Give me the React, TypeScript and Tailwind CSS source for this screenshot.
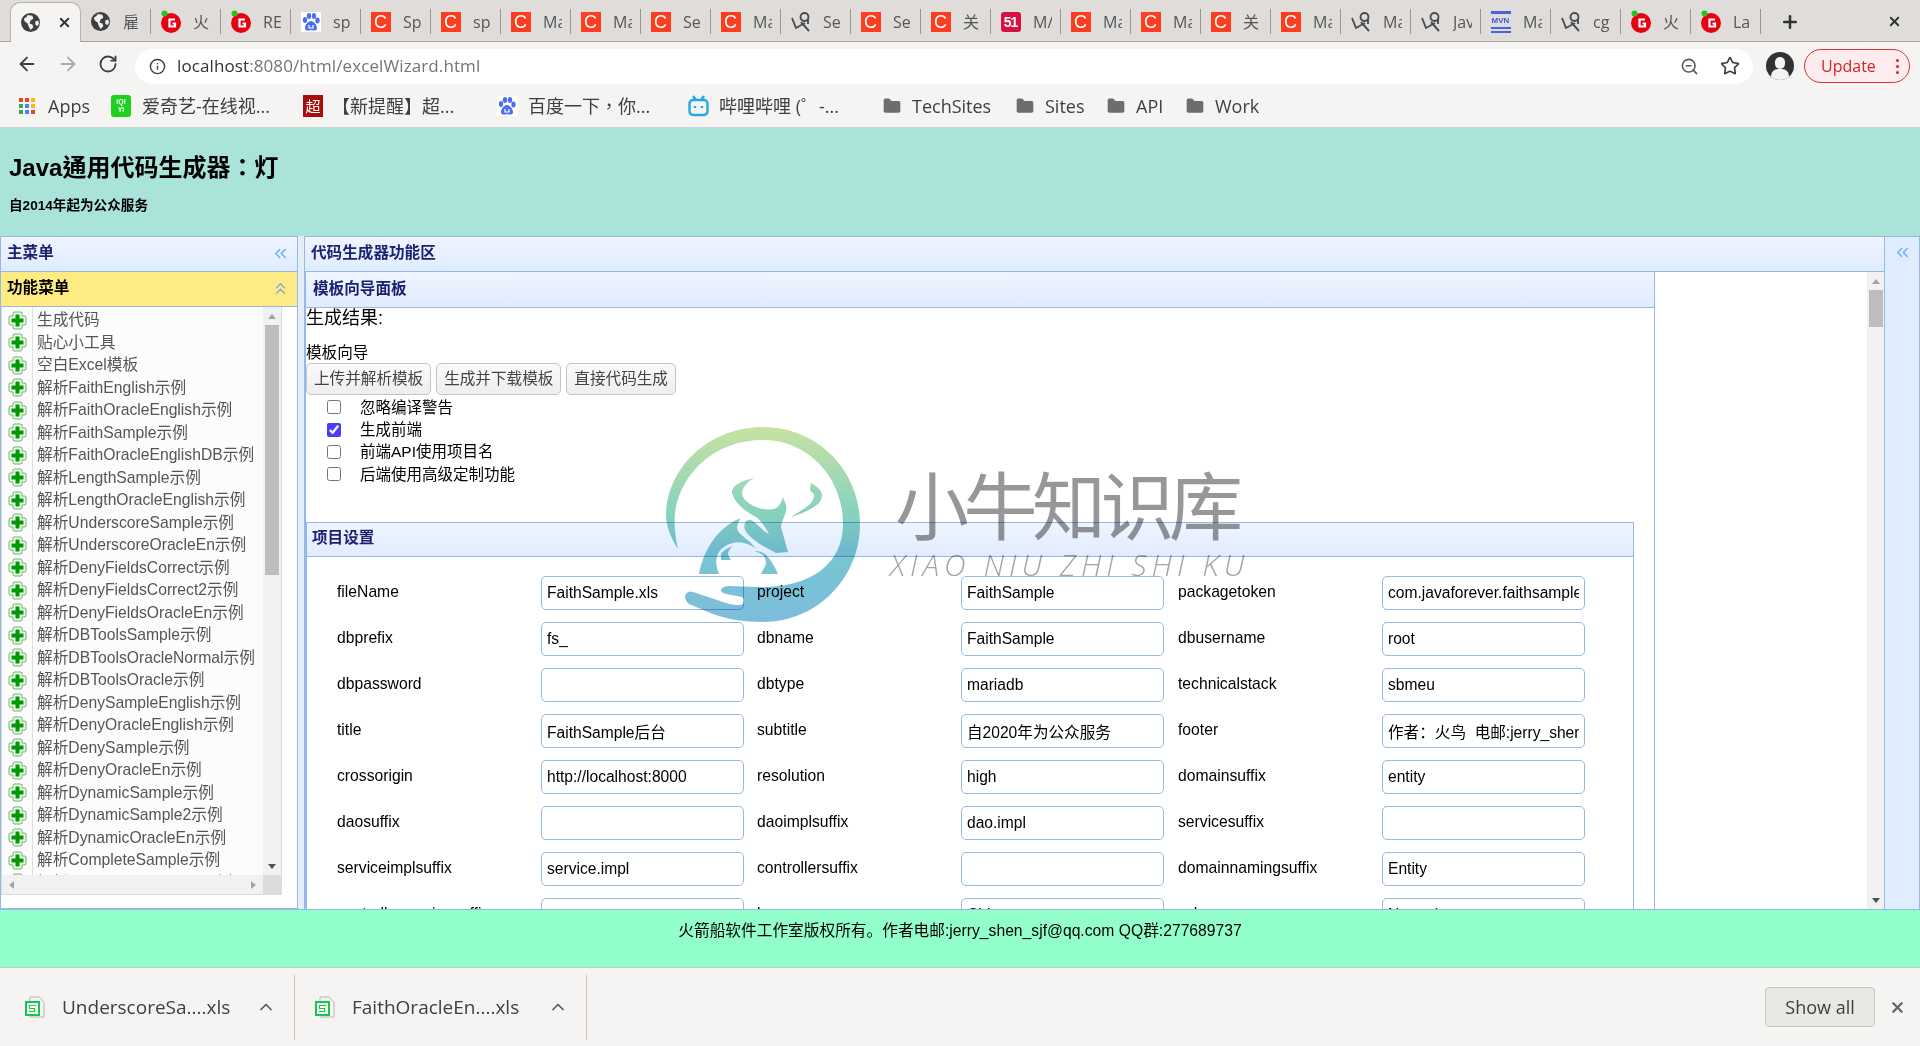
import { ArrowLeft, ArrowRight, ChevronUp, ChevronsLeft, ChevronsUp, Folder, Info, Plus, RotateCw, Star, X, ZoomOut } from 'lucide-react'

const sans = 'font-["Liberation_Sans","Noto_Sans_CJK_TC",sans-serif]'
const cn = 'font-["Liberation_Sans","Noto_Sans_CJK_SC",sans-serif]'
const ui = 'font-["Open_Sans","Noto_Sans_CJK_TC",sans-serif]'

function Globe({ size = 19 }: { size?: number }) {
  return (
    <svg width={size} height={size} viewBox="0 0 20 20" className="shrink-0">
      <circle cx="10" cy="10" r="10" fill="#3b3f42" />
      <path d="M7 2l5 1 1 3-3 2-1 3 3 1 1 3-3 3-2-4-1-3-3-2-1-3 3-2z" fill="#f2f1ef" />
      <path d="M15 9l3-1 1 3-2 3-2-2z" fill="#f2f1ef" />
    </svg>
  )
}

function RedG() {
  return (
    <svg width="20" height="24" viewBox="0 0 20 24" className="shrink-0">
      <circle cx="10" cy="13" r="10" fill="#e60012" />
      <path d="M14 9.5H8.5v7H14v-3h-2.5" fill="none" stroke="#fff" strokeWidth="2.2" />
      <circle cx="3.5" cy="3.5" r="3" fill="#22c520" />
    </svg>
  )
}

function RedC() {
  return (
    <div className="w-5 h-5 shrink-0 bg-[#fc3d1f] flex items-center justify-center">
      <span className={`text-white text-[18px] leading-none ${sans}`}>C</span>
    </div>
  )
}

function Paw({ size = 20 }: { size?: number }) {
  return (
    <svg width={size} height={size} viewBox="0 0 20 20" className="shrink-0">
      <rect width="20" height="20" fill="#fff" />
      <g fill="#4e6ef2">
        <ellipse cx="4" cy="8" rx="2.2" ry="3" />
        <ellipse cx="8" cy="4" rx="2.2" ry="3" />
        <ellipse cx="13" cy="4" rx="2.2" ry="3" />
        <ellipse cx="16.5" cy="8.5" rx="2.2" ry="3" />
        <path d="M10 9c-3 0-6 4-6 7 0 3 3 3 6 2 3 1 6 1 6-2 0-3-3-7-6-7z" />
      </g>
      <path d="M8 13v3h4v-3" fill="none" stroke="#fff" strokeWidth="1.2" />
    </svg>
  )
}

function Bird() {
  return (
    <svg width="20" height="21" viewBox="0 0 20 21" className="shrink-0" fill="none" stroke="#4a4d50" strokeWidth="1.9">
      <path d="M1 7l4 10 9-5" />
      <circle cx="13.5" cy="6" r="4" />
      <path d="M10 11l8 9" />
      <path d="M17 8v5" />
    </svg>
  )
}

function Badge51() {
  return (
    <div className="w-5 h-5 shrink-0 rounded-[3px] bg-[#d6113f] flex items-center justify-center">
      <span className={`text-white text-[14px] font-bold leading-none tracking-[-1px] ${sans}`}>51</span>
    </div>
  )
}

function Mvn() {
  return (
    <div className="w-5 shrink-0 flex flex-col gap-[2px]">
      <div className="h-[3px] bg-[#4a63d8]" />
      <span className={`text-[8px] font-bold leading-[9px] text-[#3d5ce0] text-center ${sans}`}>MVN</span>
      <div className="h-[2px] bg-[#4a63d8]" />
      <div className="h-[2px] bg-[#4a63d8]" />
    </div>
  )
}

const tabs: [string, string][] = [
  ['globe', '雇'], ['g', '火'], ['g', 'RE'], ['paw', 'sp'], ['c', 'Sp'], ['c', 'sp'], ['c', 'Ma'], ['c', 'Ma'],
  ['c', 'Se'], ['c', 'Ma'], ['bird', 'Se'], ['c', 'Se'], ['c', '关'], ['51', 'M/'], ['c', 'Ma'], ['c', 'Ma'],
  ['c', '关'], ['c', 'Ma'], ['bird', 'Ma'], ['bird', 'Jav'], ['mvn', 'Ma'], ['bird', 'cg'], ['g', '火'], ['g', 'La'],
]

function TabIcon({ kind }: { kind: string }) {
  if (kind === 'globe') return <Globe />
  if (kind === 'g') return <RedG />
  if (kind === 'paw') return <Paw />
  if (kind === 'bird') return <Bird />
  if (kind === '51') return <Badge51 />
  if (kind === 'mvn') return <Mvn />
  return <RedC />
}

function TabBar() {
  return (
    <div className={`h-[42px] shrink-0 bg-[#dfdcd9] border-b border-[#a8a5a0] flex items-stretch pt-[2px] pl-[10px] ${ui}`}>
      <div className="w-[71px] shrink-0 -mb-px bg-[#f5f4f2] border border-b-0 border-[#b5b2ad] rounded-t-[10px] flex items-center pl-[10px] gap-[17px]">
        <Globe />
        <X size={15} strokeWidth={3} className="text-[#2e3436]" />
      </div>
      {tabs.map(([kind, label], i) => (
        <div key={i} className="w-[70px] shrink-0 flex items-center">
          <div className="w-[19px]" />
          <div className="w-[21px] -ml-[10px] flex justify-center shrink-0"><TabIcon kind={kind} /></div>
          <span className="ml-[12px] w-[19px] overflow-hidden whitespace-nowrap text-[16px] text-[#54585a]">{label}</span>
          <div className="ml-auto h-[25px] w-px bg-[#9a9792]" />
        </div>
      ))}
      <div className="w-[58px] shrink-0 flex items-center justify-center">
        <Plus size={20} strokeWidth={3} className="text-[#2e3436]" />
      </div>
      <div className="flex-1 flex items-center justify-center pl-[50px]">
        <X size={15} strokeWidth={3} className="text-[#2e3436]" />
      </div>
    </div>
  )
}

function Toolbar() {
  return (
    <div className={`h-[43px] shrink-0 bg-[#f5f4f2] flex items-center ${ui}`}>
      <div className="w-[135px] shrink-0 flex items-center pl-[16px] gap-[19px]">
        <ArrowLeft size={22} strokeWidth={2} className="text-[#3c4043]" />
        <ArrowRight size={22} strokeWidth={2} className="text-[#a9abad]" />
        <RotateCw size={20} strokeWidth={2.2} className="text-[#3c4043]" />
      </div>
      <div className="w-[1618px] h-[35px] mt-[5px] shrink-0 bg-white rounded-full flex items-center pl-[14px] pr-[13px]">
        <Info size={17} className="text-[#3c4043]" />
        <span className="ml-[11px] text-[17px] tracking-[0.1px] text-[#70757a] whitespace-nowrap">
          <span className="text-[#2e3436]">localhost</span>:8080/html/excelWizard.html
        </span>
        <ZoomOut size={19} className="ml-auto text-[#54585a]" />
        <Star size={20} strokeWidth={2} className="ml-[21px] text-[#3c4043]" />
      </div>
      <div className="ml-[13px] w-[28px] h-[28px] mt-[5px] shrink-0 rounded-full bg-[#2e3436] relative overflow-hidden">
        <div className="absolute left-[9px] top-[5px] w-[10px] h-[12px] rounded-full bg-[#f5f4f2]" />
        <div className="absolute left-[5px] top-[17px] w-[18px] h-[14px] rounded-full bg-[#f5f4f2]" />
      </div>
      <div className="ml-[10px] w-[106px] h-[34px] mt-[5px] shrink-0 rounded-full border border-[#d9303a] bg-[#fceced] flex items-center pl-[16px] text-[16px] text-[#d4232d]">
        Update
        <span className="ml-auto mr-[10px] flex flex-col gap-[3px]">
          <i className="w-[3px] h-[3px] rounded-full bg-[#d4232d]" />
          <i className="w-[3px] h-[3px] rounded-full bg-[#d4232d]" />
          <i className="w-[3px] h-[3px] rounded-full bg-[#d4232d]" />
        </span>
      </div>
    </div>
  )
}

function AppsIcon() {
  const cols = ['#ea4335', '#ea4335', '#fbbc05', '#34a853', '#4285f4', '#fbbc05', '#34a853', '#4285f4', '#ea4335']
  return (
    <div className="grid grid-cols-3 gap-[2px] w-[16px] shrink-0">
      {cols.map((c, i) => <div key={i} className="h-[4px]" style={{ background: c }} />)}
    </div>
  )
}

function Bookmarks() {
  const folder = <Folder size={20} fill="#6a6e70" strokeWidth={0} className="shrink-0" />
  const label = 'text-[#3c4043] text-[18px] whitespace-nowrap'
  return (
    <div className={`h-[43px] shrink-0 bg-[#f5f4f2] border-b border-[#cfd8d5] flex items-center pl-[19px] ${ui}`}>
      <div className="w-[92px] shrink-0 flex items-center gap-[13px]"><AppsIcon /><span className={label}>Apps</span></div>
      <div className="w-[192px] shrink-0 flex items-center gap-[11px]">
        <div className="w-[20px] h-[22px] rounded-[3px] bg-[#1fd11f] flex items-center justify-center">
          <span className={`text-[7px] font-bold leading-[8px] text-white text-center ${sans}`}>iQI<br />YI</span>
        </div>
        <span className={label}>爱奇艺-在线视...</span>
      </div>
      <div className="w-[194px] shrink-0 flex items-center gap-[9px]">
        <div className="w-[20px] h-[22px] bg-[#a80c0c] flex items-center justify-center text-white text-[15px] leading-none">超</div>
        <span className={label}>【新提醒】超...</span>
      </div>
      <div className="w-[191px] shrink-0 flex items-center gap-[11px]"><Paw /><span className={label}>百度一下，你...</span></div>
      <div className="w-[194px] shrink-0 flex items-center gap-[10px]">
        <svg width="21" height="22" viewBox="0 0 21 22" fill="none" stroke="#20a8e8" strokeWidth="2.4" className="shrink-0">
          <rect x="1.5" y="5" width="18" height="15" rx="3.5" />
          <path d="M5 1l3 4M16 1l-3 4" />
          <path d="M7 11v2M14 11v2" />
        </svg>
        <span className={label}>哔哩哔哩 (゜-...</span>
      </div>
      <div className="w-[133px] shrink-0 flex items-center gap-[10px]">{folder}<span className={label}>TechSites</span></div>
      <div className="w-[91px] shrink-0 flex items-center gap-[10px]">{folder}<span className={label}>Sites</span></div>
      <div className="w-[79px] shrink-0 flex items-center gap-[10px]">{folder}<span className={label}>API</span></div>
      <div className="flex items-center gap-[10px]">{folder}<span className={label}>Work</span></div>
    </div>
  )
}

const treeItems = [
  '生成代码', '贴心小工具', '空白Excel模板', '解析FaithEnglish示例', '解析FaithOracleEnglish示例', '解析FaithSample示例',
  '解析FaithOracleEnglishDB示例', '解析LengthSample示例', '解析LengthOracleEnglish示例', '解析UnderscoreSample示例',
  '解析UnderscoreOracleEn示例', '解析DenyFieldsCorrect示例', '解析DenyFieldsCorrect2示例', '解析DenyFieldsOracleEn示例',
  '解析DBToolsSample示例', '解析DBToolsOracleNormal示例', '解析DBToolsOracle示例', '解析DenySampleEnglish示例',
  '解析DenyOracleEnglish示例', '解析DenySample示例', '解析DenyOracleEn示例', '解析DynamicSample示例',
  '解析DynamicSample2示例', '解析DynamicOracleEn示例', '解析CompleteSample示例', '解析CompleteOracleEn示例',
]

function PlusIcon() {
  return (
    <svg width="19" height="19" viewBox="0 0 19 19" className="shrink-0">
      <path d="M6 1h7l1 1v3h3l1 1v7l-1 1h-3v3l-1 1H6l-1-1v-3H2l-1-1V6l1-1h3V2z" fill="#eaf6ea" stroke="#6fb56f" />
      <path d="M7.5 3.5h4v4h4v4h-4v4h-4v-4h-4v-4h4z" fill="#009a00" />
    </svg>
  )
}

function Triangle({ dir, color = '#a3a3a3' }: { dir: 'up' | 'down' | 'left' | 'right'; color?: string }) {
  const pts = { up: '0,5 4,0 8,5', down: '0,0 8,0 4,5', left: '5,0 5,8 0,4', right: '0,0 0,8 5,4' }[dir]
  const wide = dir === 'up' || dir === 'down'
  return (
    <svg width={wide ? 8 : 5} height={wide ? 5 : 8} className="shrink-0">
      <polygon points={pts} fill={color} />
    </svg>
  )
}

function LeftPanel() {
  return (
    <div className={`w-[298px] shrink-0 flex flex-col border border-[#95b8e7] ${cn}`}>
      <div className="h-[35px] shrink-0 bg-gradient-to-b from-[#eff5ff] to-[#e0ecff] border-b border-[#95b8e7] flex items-center justify-between pl-[6px] pr-[7px] pb-[2px]">
        <span className="text-[15.6px] font-bold text-[#1c2171]">主菜单</span>
        <ChevronsLeft size={19} strokeWidth={1.6} className="text-[#6ea3f5]" />
      </div>
      <div className="h-[35px] shrink-0 bg-[#ffeb84] border-b border-[#95b8e7] flex items-center justify-between pl-[6px] pr-[7px] pb-[2px]">
        <span className="text-[15.6px] font-bold text-black">功能菜单</span>
        <ChevronsUp size={19} strokeWidth={1.6} className="text-[#7fa8d8]" />
      </div>
      <div className="flex-1 bg-white min-h-0 pb-[13px] pr-[15px]">
        <div className="h-full border border-t-0 border-[#dcdcdc] flex flex-col bg-[#fcfcfc]">
          <div className="flex-1 min-h-0 flex">
            <div className="flex-1 min-w-0 overflow-hidden pt-[2px] relative">
              <div className="absolute left-[30px] top-0 bottom-0 w-px bg-[#dfdfdf]" />
              {treeItems.map((t) => (
                <div key={t} className="h-[22.5px] flex items-center pl-[6px] text-[15.7px] text-[#555] whitespace-nowrap">
                  <PlusIcon />
                  <span className="ml-[10px]">{t}</span>
                </div>
              ))}
            </div>
            <div className="w-[18px] shrink-0 bg-[#f1f1f1] flex flex-col items-center">
              <div className="h-[18px] flex items-center justify-center shrink-0"><Triangle dir="up" /></div>
              <div className="w-[14px] h-[250px] bg-[#bdbdbd]" />
              <div className="mt-auto h-[18px] flex items-center justify-center shrink-0"><Triangle dir="down" color="#505050" /></div>
            </div>
          </div>
          <div className="h-[19px] shrink-0 bg-[#f1f1f1] flex items-center">
            <div className="flex-1 flex items-center justify-between px-[7px]">
              <Triangle dir="left" />
              <Triangle dir="right" />
            </div>
            <div className="w-[18px] h-full bg-[#dcdcdc]" />
          </div>
        </div>
      </div>
    </div>
  )
}

const rows: [string, string, string, string, string, string][] = [
  ['fileName', 'FaithSample.xls', 'project', 'FaithSample', 'packagetoken', 'com.javaforever.faithsample'],
  ['dbprefix', 'fs_', 'dbname', 'FaithSample', 'dbusername', 'root'],
  ['dbpassword', '', 'dbtype', 'mariadb', 'technicalstack', 'sbmeu'],
  ['title', 'FaithSample后台', 'subtitle', '自2020年为公众服务', 'footer', '作者：火鸟  电邮:jerry_shen_sjf@qq.com'],
  ['crossorigin', 'http://localhost:8000', 'resolution', 'high', 'domainsuffix', 'entity'],
  ['daosuffix', '', 'daoimplsuffix', 'dao.impl', 'servicesuffix', ''],
  ['serviceimplsuffix', 'service.impl', 'controllersuffix', '', 'domainnamingsuffix', 'Entity'],
  ['controllernamingsuffix', '', 'language', 'Chinese', 'schema', 'Normal'],
]

function Field({ value }: { value: string }) {
  return (
    <input
      readOnly
      value={value}
      className="w-[203px] h-[34px] rounded-[5px] border border-[#95b8e7] bg-white px-[5px] text-[15.6px] text-black outline-none"
    />
  )
}

function Wizard() {
  const label = 'h-[34px] flex items-center pb-[1px] text-[15.7px] text-black'
  return (
    <div className={`flex-1 min-w-0 overflow-hidden bg-white ${cn}`}>
      <div className="w-[1350px] h-full border-x border-[#95b8e7]">
        <div className="h-[36px] bg-gradient-to-b from-[#eff5ff] to-[#e0ecff] border-b border-[#95b8e7] flex items-center pl-[7px] pb-[2px]">
          <span className="text-[15.6px] font-bold text-[#1c2171]">模板向导面板</span>
        </div>
        <div>
          <div className="h-[20px] text-[18px] leading-[20px] text-black">生成结果:</div>
          <div className="mt-[16px] h-[18px] text-[15.6px] leading-[18px] text-black">模板向导</div>
          <div className="flex gap-[5px] mt-px">
            {['上传并解析模板', '生成并下载模板', '直接代码生成'].map((b) => (
              <div key={b} className="h-[32px] px-[7px] rounded-[5px] border border-[#c4c4c4] bg-gradient-to-b from-[#fafafa] to-[#eeeeee] flex items-center text-[15.6px] text-[#444]">{b}</div>
            ))}
          </div>
          <div className="mt-[1px] pl-[21px]">
            {[['忽略编译警告', false], ['生成前端', true], ['前端API使用项目名', false], ['后端使用高级定制功能', false]].map(([t, on]) => (
              <label key={t as string} className="h-[22.4px] flex items-center text-[15.5px] text-black">
                <input type="checkbox" readOnly checked={on as boolean} className="w-[14px] h-[14px] m-0 accent-[#4a3cf7] shrink-0" />
                <span className="ml-[19px]">{t}</span>
              </label>
            ))}
          </div>
          <div className="mt-[36px] w-[1328px] border border-[#95b8e7]">
            <div className="h-[34px] bg-gradient-to-b from-[#eff5ff] to-[#e0ecff] border-b border-[#95b8e7] flex items-center pl-[5px] pb-[2px]">
              <span className="text-[15.6px] font-bold text-[#1c2171]">项目设置</span>
            </div>
            <div className="pt-[19px] grid grid-cols-[234px_203px_217px_203px_218px_203px] gap-y-[12px]">
              {rows.map((r) => (
                <div key={r[0]} className="contents">
                  <div className={`${label} pl-[30px]`}>{r[0]}</div>
                  <Field value={r[1]} />
                  <div className={`${label} pl-[13px]`}>{r[2]}</div>
                  <Field value={r[3]} />
                  <div className={`${label} pl-[14px]`}>{r[4]}</div>
                  <Field value={r[5]} />
                </div>
              ))}
            </div>
          </div>
        </div>
      </div>
    </div>
  )
}

function MainPanel() {
  return (
    <div className={`flex-1 min-w-0 flex flex-col border-l border-[#95b8e7] ${cn}`}>
      <div className="h-[36px] shrink-0 bg-gradient-to-b from-[#eff5ff] to-[#e0ecff] border-y border-[#95b8e7] flex items-center pl-[6px] pb-[2px]">
        <span className="text-[15.6px] font-bold text-[#1c2171]">代码生成器功能区</span>
      </div>
      <div className="flex-1 min-h-0 flex">
        <Wizard />
        <div className="w-[17px] shrink-0 bg-[#f1f1f1] flex flex-col items-center">
          <div className="h-[18px] flex items-center justify-center shrink-0"><Triangle dir="up" /></div>
          <div className="w-[14px] h-[37px] bg-[#bdbdbd]" />
          <div className="mt-auto h-[18px] flex items-center justify-center shrink-0"><Triangle dir="down" color="#505050" /></div>
        </div>
      </div>
    </div>
  )
}

function Watermark() {
  return (
    <div className="absolute left-[666px] top-[427px] pointer-events-none flex mix-blend-multiply">
      <svg width="196" height="196" viewBox="0 0 196 196" className="shrink-0">
        <defs>
          <linearGradient id="wm" gradientUnits="userSpaceOnUse" x1="0" y1="0" x2="0" y2="195">
            <stop offset="0" stopColor="#c8e2a2" />
            <stop offset="0.45" stopColor="#85d2bf" />
            <stop offset="0.72" stopColor="#78c3d4" />
            <stop offset="1" stopColor="#7dbddc" />
          </linearGradient>
        </defs>
        <g fill="url(#wm)">
          <path d="M12 122C4 110 0 98 0 87 2 38 45 0 97 0c54 0 97 43 97 97 0 54-43 98-97 98-19 0-37-3-50-8L23 177c-4-3-5-8-3-10 2-3 5-3 7-2l30 10c8 3 17 4 20 2 2-3 1-6-1-7l-16-3c-4-1-6-3-5-4 1-3 5-4 9-4l26 1c50 2 87-20 87-63 0-47-35-84-80-84C50 13 15 45 9 85c-1 12 0 25 3 37z" />
          <path d="M88 51C78 53 66 58 66 65c1 9 12 19 24 25 5 3 10 12 13 17-5-2-11-10-18-14-5-1-8 4-6 10 5 9 19 17 31 23l12-1-7-25c1-8 7-15 5-22l-3-8c-2 6-4 10-9 12-13 2-26-4-31-12-3-6 1-13 11-19z" />
          <path d="M75 91C55 98 38 120 33 147h20c-5-12-3-22 5-27 10-7 22-6 32 2-6-9-14-12-18-18-2-4 0-9 3-13z" />
          <path d="M67 119c-6 2-12 6-12 9v5h10c-2-3-3-6-3-6 0-3 2-6 5-8z" />
          <path d="M88 124c5 0 9 1 12 4 5 5 9 12 12 19H95l5-10c0-4-1-7-3-9-2-2-6-3-9-4z" />
          <path d="M145 56c7 4 11 8 11 12 0 5-3 9-8 12-7 4-15 8-23 10 6-4 13-8 18-12 3-3 5-6 5-10 0-2-4-3-4-6z" />
        </g>
      </svg>
      <div className="ml-[33px] mt-[33px] flex flex-col">
        <span className='text-[74px] leading-[84px] tracking-[-5.5px] text-[#979797] font-["Noto_Sans_CJK_SC",sans-serif] whitespace-nowrap'>小牛知识库</span>
        <span className='mt-[4px] -ml-[5px] text-[30px] leading-[34px] tracking-[5px] italic font-light text-[#a5a5a5] font-["Open_Sans",sans-serif] whitespace-nowrap'>XIAO NIU ZHI SHI KU</span>
      </div>
    </div>
  )
}

function XlsIcon() {
  return (
    <svg width="20" height="22" viewBox="0 0 20 22" className="shrink-0">
      <path d="M5 1h9l5 5v15H5z" fill="#f5f4f2" stroke="#b8b8b8" />
      <rect x="1" y="6" width="13" height="13" fill="#fff" stroke="#12c94a" strokeWidth="2" />
      <path d="M11 9.5H4.5v3h5v3H4" fill="none" stroke="#12c94a" strokeWidth="1.2" />
    </svg>
  )
}

function DownloadBar() {
  const item = 'h-[65px] border-r border-[#c8c5c0] flex items-center shrink-0'
  return (
    <div className={`h-[79px] shrink-0 bg-[#f5f4f2] border-t border-[#cdcac5] flex items-center ${ui}`}>
      <div className={`${item} w-[295px] pl-[25px]`}>
        <XlsIcon />
        <span className="ml-[17px] w-[194px] text-[19px] text-[#3c4043] whitespace-nowrap">UnderscoreSa....xls</span>
        <ChevronUp size={20} className="text-[#54585a]" />
      </div>
      <div className={`${item} w-[292px] pl-[20px]`}>
        <XlsIcon />
        <span className="ml-[17px] w-[196px] text-[19px] text-[#3c4043] whitespace-nowrap">FaithOracleEn....xls</span>
        <ChevronUp size={20} className="text-[#54585a]" />
      </div>
      <div className="ml-auto w-[110px] h-[40px] rounded-[4px] border border-[#c9c7c2] bg-[#e8e7e4] flex items-center justify-center text-[18px] text-[#3c4043]">Show all</div>
      <X size={17} strokeWidth={3} className="ml-[14px] mr-[14px] text-[#5e6265]" />
    </div>
  )
}

export default function App() {
  return (
    <div className="relative w-[1920px] h-[1046px] overflow-hidden flex flex-col bg-white">
      <TabBar />
      <Toolbar />
      <Bookmarks />
      <div className={`h-[108px] shrink-0 bg-[#aae3d9] pl-[9px] pt-[25px] ${sans}`}>
        <div className="text-[24px] font-bold leading-[30px] text-black">Java通用代码生成器：灯</div>
        <div className={`mt-[15px] text-[13.6px] font-bold leading-[16px] text-black ${cn}`}>自2014年起为公众服务</div>
      </div>
      <div className="h-[674px] shrink-0 flex bg-[#e5edf8] overflow-hidden border-b border-[#95b8e7]">
        <LeftPanel />
        <div className="w-[6px] shrink-0" />
        <MainPanel />
        <div className="w-[36px] shrink-0 bg-[#e0ecff] border-x border-[#95b8e7] border-t flex justify-center pt-[6px]">
          <ChevronsLeft size={19} strokeWidth={1.6} className="text-[#6ea3f5]" />
        </div>
      </div>
      <div className={`h-[57px] shrink-0 bg-[#92ffcb] pt-[11px] text-center text-[15.7px] leading-[20px] text-black ${cn}`}>
        火箭船软件工作室版权所有。作者电邮:jerry_shen_sjf@qq.com QQ群:277689737
      </div>
      <DownloadBar />
      <Watermark />
    </div>
  )
}
